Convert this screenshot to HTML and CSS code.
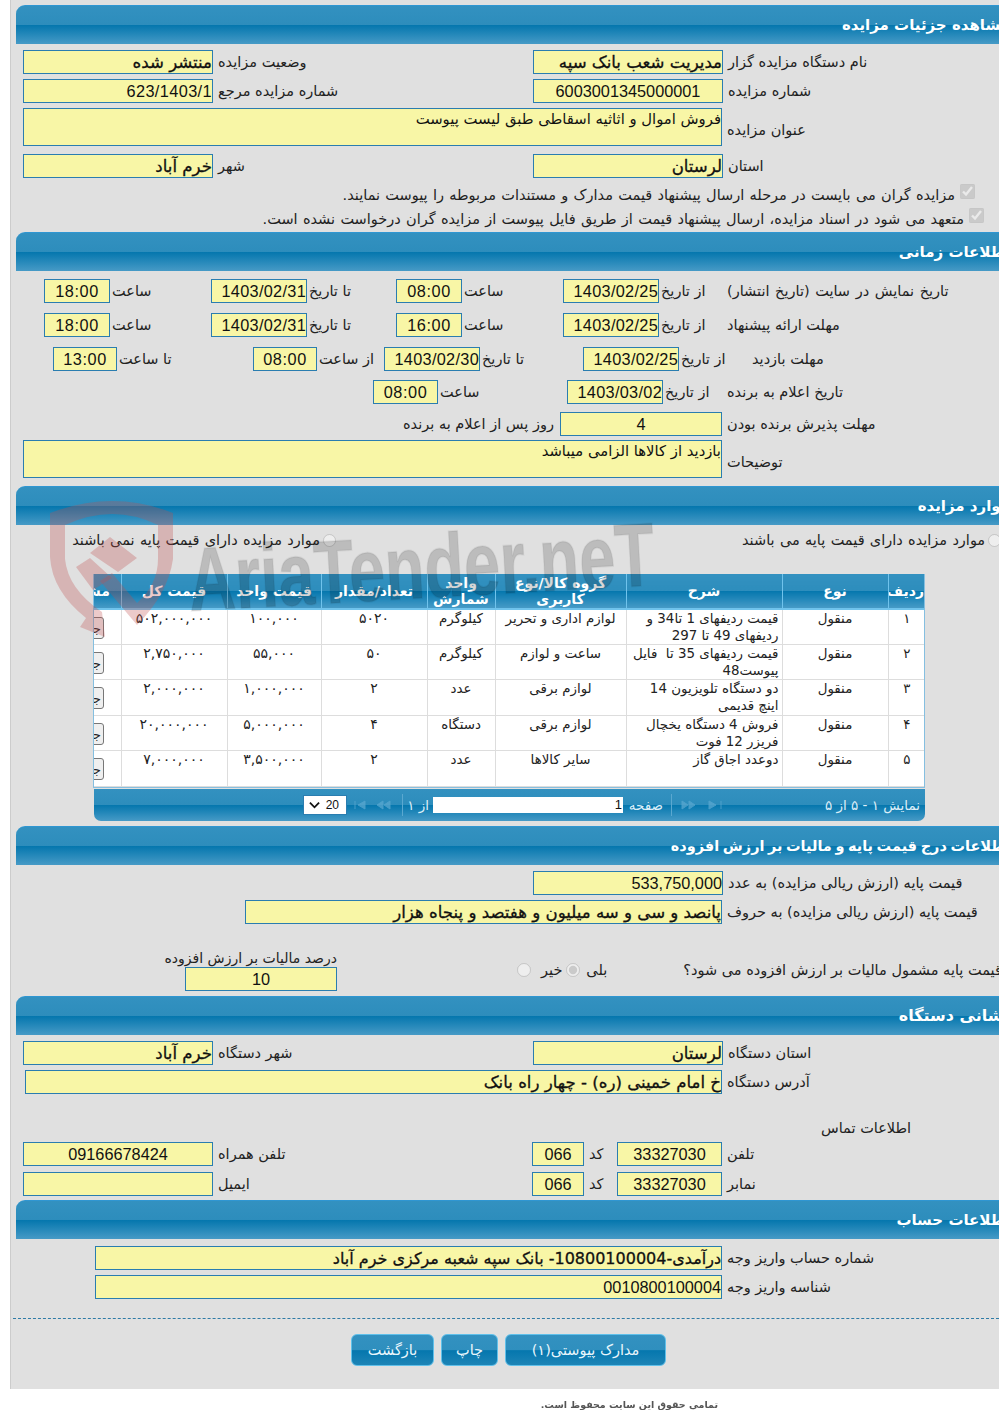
FILE: index.html
```html
<!DOCTYPE html>
<html lang="fa">
<head>
<meta charset="utf-8">
<title>مشاهده جزئیات مزایده</title>
<link rel="stylesheet" href="styles.css">
</head>
<body>
<div class="page">
  <section class="sec s1">
    <h2 class="head">مشاهده جزئیات مزایده</h2>
    <div class="row r50">
      <div class="pair w510"><div class="val w190 hv">منتشر شده</div><span class="lbl">وضعیت مزایده</span></div>
      <div class="pair"><div class="val w190 hv">مدیریت شعب بانک سپه</div><span class="lbl">نام دستگاه مزایده گزار</span></div>
    </div>
    <div class="row r25 t4">
      <div class="pair w510"><div class="val w190 num ref">623/1403/1</div><span class="lbl">شماره مزایده مرجع</span></div>
      <div class="pair"><div class="val w190 num ctr">6003001345000001</div><span class="lbl">شماره مزایده</span></div>
    </div>
    <div class="row t5 mid">
      <div class="pair"><div class="area w699">فروش اموال و اثاثیه اسقاطی طبق لیست پیوست</div><span class="lbl">عنوان مزایده</span></div>
    </div>
    <div class="row r25 t7">
      <div class="pair w510"><div class="val w190 hv">خرم آباد</div><span class="lbl">شهر</span></div>
      <div class="pair"><div class="val w190 hv">لرستان</div><span class="lbl">استان</span></div>
    </div>
    <div class="chk c1"><span class="lbl">مزایده گران می بایست در مرحله ارسال پیشنهاد قیمت مدارک و مستندات مربوطه را پیوست نمایند.</span><input type="checkbox" checked disabled></div>
    <div class="chk c2"><span class="lbl">متعهد می شود در اسناد مزایده، ارسال پیشنهاد قیمت از طریق فایل پیوست از مزایده گران درخواست نشده است.</span><input type="checkbox" checked disabled></div>
  </section>

  <section class="sec s2">
    <h2 class="head">اطلاعات زمانی</h2>
    <div class="row r25 t7 p44">
      <div class="pair w167"><div class="val w66 ctr num time">18:00</div><span class="lbl">ساعت</span></div>
      <div class="pair w185"><div class="val w96 num date">1403/02/31</div><span class="lbl">تا تاریخ</span></div>
      <div class="pair w167"><div class="val w66 ctr num time">08:00</div><span class="lbl">ساعت</span></div>
      <div class="pair w164"><div class="val w96 num date">1403/02/25</div><span class="lbl">از تاریخ</span></div>
      <span class="lbl wide">تاریخ نمایش در سایت (تاریخ انتشار)</span>
    </div>
    <div class="row r25 t9 p44">
      <div class="pair w167"><div class="val w66 ctr num time">18:00</div><span class="lbl">ساعت</span></div>
      <div class="pair w185"><div class="val w96 num date">1403/02/31</div><span class="lbl">تا تاریخ</span></div>
      <div class="pair w167"><div class="val w66 ctr num time">16:00</div><span class="lbl">ساعت</span></div>
      <div class="pair w164"><div class="val w96 num date">1403/02/25</div><span class="lbl">از تاریخ</span></div>
      <span class="lbl">مهلت ارائه پیشنهاد</span>
    </div>
    <div class="row r25 t9 p53">
      <div class="pair w200"><div class="val w64 ctr num time">13:00</div><span class="lbl">تا ساعت</span></div>
      <div class="pair w131"><div class="val w64 ctr num time">08:00</div><span class="lbl">از ساعت</span></div>
      <div class="pair w199"><div class="val w96 num date">1403/02/30</div><span class="lbl">تا تاریخ</span></div>
      <div class="pair w144"><div class="val w96 num date">1403/02/25</div><span class="lbl">از تاریخ</span></div>
      <span class="lbl visit">مهلت بازدید</span>
    </div>
    <div class="row r25 t8 p373">
      <div class="pair w194"><div class="val w65 ctr num time">08:00</div><span class="lbl">ساعت</span></div>
      <div class="pair w160"><div class="val w96 num date">1403/03/02</div><span class="lbl">از تاریخ</span></div>
      <span class="lbl">تاریخ اعلام به برنده</span>
    </div>
    <div class="row r25 t7 p403">
      <span class="lbl w157">روز پس از اعلام به برنده</span>
      <div class="pair"><div class="val w162 ctr num">4</div><span class="lbl">مهلت پذیرش برنده بودن</span></div>
    </div>
    <div class="row t4 mid">
      <div class="pair"><div class="area w699">بازدید از کالاها الزامی میباشد</div><span class="lbl">توضیحات</span></div>
    </div>
  </section>

  <section class="sec s3">
    <h2 class="head">موارد مزایده</h2>
    <div class="radios">
      <div class="radio-left"><span class="lbl">موارد مزایده دارای قیمت پایه نمی باشند</span><input type="radio" disabled></div>
      <div class="radio-right"><span class="lbl">موارد مزایده دارای قیمت پایه می باشند</span><input type="radio" disabled></div>
    </div>
    <div class="grid-wrap">
      <table class="grid">
        <colgroup><col class="c-act"><col class="c-tot"><col class="c-unit"><col class="c-qty"><col class="c-meas"><col class="c-grp"><col class="c-desc"><col class="c-type"><col class="c-idx"></colgroup>
        <thead><tr><th><span class="clip-l">مشاهده</span></th><th>قیمت کل</th><th>قیمت واحد</th><th>تعداد/مقدار</th><th>واحد شمارش</th><th>گروه کالا/نوع کاربری</th><th>شرح</th><th>نوع</th><th>ردیف</th></tr></thead>
        <tbody>
          <tr class="h35"><td class="act"><span class="btn-clip"><button class="mini" disabled>جزئیات</button></span></td><td class="fa">۵۰۲,۰۰۰,۰۰۰</td><td class="fa">۱۰۰,۰۰۰</td><td class="fa">۵۰۲۰</td><td>کیلوگرم</td><td>لوازم اداری و تحریر</td><td class="rt">قیمت ردیفهای 1 تا34 و<br>ردیفهای 49 تا 297</td><td>منقول</td><td>۱</td></tr>
          <tr class="h35"><td class="act"><span class="btn-clip"><button class="mini" disabled>جزئیات</button></span></td><td class="fa">۲,۷۵۰,۰۰۰</td><td class="fa">۵۵,۰۰۰</td><td class="fa">۵۰</td><td>کیلوگرم</td><td>ساعت و لوازم</td><td class="rt">قیمت ردیفهای 35 تا &nbsp;فایل<br>پیوست48</td><td>منقول</td><td>۲</td></tr>
          <tr class="h36"><td class="act"><span class="btn-clip"><button class="mini" disabled>جزئیات</button></span></td><td class="fa">۲,۰۰۰,۰۰۰</td><td class="fa">۱,۰۰۰,۰۰۰</td><td class="fa">۲</td><td>عدد</td><td>لوازم برقی</td><td class="rt">دو دستگاه تلویزیون 14<br>اینچ قدیمی</td><td>منقول</td><td>۳</td></tr>
          <tr class="h35"><td class="act"><span class="btn-clip"><button class="mini" disabled>جزئیات</button></span></td><td class="fa">۲۰,۰۰۰,۰۰۰</td><td class="fa">۵,۰۰۰,۰۰۰</td><td class="fa">۴</td><td>دستگاه</td><td>لوازم برقی</td><td class="rt">فروش 4 دستگاه یخچال<br>فریزر 12 فوت</td><td>منقول</td><td>۴</td></tr>
          <tr class="h36"><td class="act"><span class="btn-clip"><button class="mini" disabled>جزئیات</button></span></td><td class="fa">۷,۰۰۰,۰۰۰</td><td class="fa">۳,۵۰۰,۰۰۰</td><td class="fa">۲</td><td>عدد</td><td>سایر کالاها</td><td class="rt">دوعدد اجاق گاز</td><td>منقول</td><td>۵</td></tr>
        </tbody>
      </table>
    </div>
    <div class="pager">
      <div class="psel"><svg class="chev" viewBox="0 0 12 8"><path d="M1 1.5 6 6.5 11 1.5" fill="none" stroke="#111" stroke-width="2"/></svg><span>20</span></div>
      <svg class="pico" viewBox="0 0 40 10"><path d="M1 1v8M11 1 4 5l7 4zM29 1l-6 4 6 4zM36 1l-6 4 6 4z" fill="#5aa8d0" stroke="#5aa8d0"/></svg>
      <i class="psep"></i>
      <span class="ptext pof">از ۱</span>
      <div class="pinput">1</div>
      <span class="ptext ppg">صفحه</span>
      <i class="psep"></i>
      <svg class="pico pico2" viewBox="0 0 42 10"><path d="M1 1l6 4-6 4zM8 1l6 4-6 4zM28 1l7 4-7 4zM40 1v8" fill="#5aa8d0" stroke="#5aa8d0"/></svg>
      <span class="ptext pshow">نمایش ۱ - ۵ از ۵</span>
    </div>
  </section>

  <section class="sec s4">
    <h2 class="head">اطلاعات درج قیمت پایه و مالیات بر ارزش افزوده</h2>
    <div class="row r25 t5 p533">
      <div class="pair"><div class="val w190 num">533,750,000</div><span class="lbl">قیمت پایه (ارزش ریالی مزایده) به عدد</span></div>
    </div>
    <div class="row r25 t4 p245">
      <div class="pair"><div class="val w477 hv">پانصد و سی و سه میلیون و هفتصد و پنجاه هزار</div><span class="lbl">قیمت پایه (ارزش ریالی مزایده) به حروف</span></div>
    </div>
    <div class="taxrow">
      <div class="taxbox"><span class="lbl">درصد مالیات بر ارزش افزوده</span><div class="val w152 ctr num">10</div></div>
      <div class="taxq">
        <input type="radio" disabled><span class="lbl">خیر</span>
        <input class="rd2" type="radio" checked disabled><span class="lbl">بلی</span>
        <span class="lbl q">قیمت پایه مشمول مالیات بر ارزش افزوده می شود؟</span>
      </div>
    </div>
  </section>

  <section class="sec s5">
    <h2 class="head">نشانی دستگاه</h2>
    <div class="row r25 t5">
      <div class="pair w510"><div class="val w190 hv">خرم آباد</div><span class="lbl">شهر دستگاه</span></div>
      <div class="pair"><div class="val w190 hv">لرستان</div><span class="lbl">استان دستگاه</span></div>
    </div>
    <div class="row r25 t4 p25">
      <div class="pair"><div class="val w697 hv">خ امام خمینی (ره) - چهار راه بانک</div><span class="lbl">آدرس دستگاه</span></div>
    </div>
    <div class="row contact"><span class="lbl">اطلاعات تماس</span></div>
    <div class="row r25 t1">
      <div class="pair w509"><div class="val w190 num ctr">09166678424</div><span class="lbl">تلفن همراه</span></div>
      <div class="pair w85"><div class="val w52 ctr num">066</div><span class="lbl">کد</span></div>
      <div class="pair"><div class="val w105 ctr num">33327030</div><span class="lbl">تلفن</span></div>
    </div>
    <div class="row r25 t5">
      <div class="pair w509"><div class="val w190 num ctr"></div><span class="lbl">ایمیل</span></div>
      <div class="pair w85"><div class="val w52 ctr num">066</div><span class="lbl">کد</span></div>
      <div class="pair"><div class="val w105 ctr num">33327030</div><span class="lbl">نمابر</span></div>
    </div>
  </section>

  <section class="sec s6">
    <h2 class="head">اطلاعات حساب</h2>
    <div class="row r25 t6 p95">
      <div class="pair"><div class="val w627 hv acct">درآمدی-10800100004- بانک سپه شعبه مرکزی خرم آباد</div><span class="lbl">شماره حساب واریز وجه</span></div>
    </div>
    <div class="row r25 t4 p95">
      <div class="pair"><div class="val w627 num">0010800100004</div><span class="lbl">شناسه واریز وجه</span></div>
    </div>
  </section>

  <div class="dash"></div>
  <div class="actions">
    <a class="btn b1">بازگشت</a>
    <a class="btn b2">چاپ</a>
    <a class="btn b3">مدارک پیوستی(۱)</a>
  </div>
</div>
<footer class="foot">تمامی حقوق این سایت محفوظ است.</footer>

<svg class="mark" viewBox="0 0 620 150" aria-hidden="true">
  <path class="mark-s" fill-rule="evenodd" d="M0 14Q63 -10 123 14V60Q118 95 87 126L50 82 62 74 87 104Q108 85 108 60V26Q63 4 15 26V60Q18 90 52 113L55 138 30 128 36 119Q2 92 0 58Z"/>
  <path class="mark-s" d="M40 54 60 38 87 59 68 73ZM26 68 40 59 62 79 43 91Z"/>
  <text class="mark-t" transform="translate(140 112) rotate(-3.2) scale(.72 1)">AriaTender.neT</text>
</svg>
</body>
</html>
```

FILE: styles.css
```css
*{box-sizing:border-box}
html,body{margin:0;padding:0;overflow-x:hidden}
body{position:relative;width:999px;height:1410px;overflow:hidden;background:#fff;font-family:"DejaVu Sans","Liberation Sans",sans-serif;font-size:14px;color:#222}
.page{height:1389px;background:#e0e0e0;margin-left:10px;border-left:1px solid #ccc;padding:5px 0 0 5px;width:989px;position:relative;overflow:hidden}
.page:before{content:"";position:absolute;left:-10px;top:0;width:10px;height:100%;background:#e0e0e0}
.sec{width:1000px;margin-left:0}
.head{height:39px;margin:0;padding:0 6px 2px 0;direction:rtl;font-size:15px;font-weight:bold;line-height:38px;color:#fff;border-top:1px solid #2f96d2;border-top-left-radius:9px;background:linear-gradient(#3391c0 0,#2d8dbc 50%,#0577ae 51%,#469ac6 100%)}
.s1{height:227px}
.s2{height:254px}
.s3{height:340px}
.s4{height:170px}
.s5{height:204px}
.s6{height:100px}
.s4 .head{font-size:14.5px;word-spacing:-1.5px}
.s5 .head{font-size:16px}
.row{display:flex;align-items:center;padding-left:7px}
.mid{align-items:center}
.r50{height:25px;margin-top:5px}
.r25{height:25px}
.t1{margin-top:1px}.t4{margin-top:4px}.t5{margin-top:5px}.t6{margin-top:6px}.t7{margin-top:7px}.t8{margin-top:8px}.t9{margin-top:9px}
.p44{padding-left:28px}.p53{padding-left:37px}.p373{padding-left:357px}.p403{padding-left:387px}.p533{padding-left:517px}.p245{padding-left:229px}.p25{padding-left:9px}.p95{padding-left:79px}
.pair{display:flex;align-items:center;flex:none}
.w510{width:510px}.w509{width:509px}.w85{width:85px}.w167{width:167px}.w185{width:185px}.w164{width:164px}.w200{width:200px}.w131{width:131px}.w199{width:199px}.w144{width:144px}.w194{width:194px}.w160{width:160px}
.val,.area{background:#f8f6a6;border:1px solid #2a7db0;color:#111;direction:rtl;text-align:right;flex:none;font-size:15px;line-height:23px;height:24px;white-space:nowrap;overflow:hidden}
.area{height:38px;white-space:normal;font-size:14.8px;line-height:19px}
.area+.lbl{margin-top:5px}
.num{font-family:"Liberation Sans",sans-serif;font-size:16.3px;direction:ltr}
.ref{letter-spacing:.4px}
.date{letter-spacing:.3px}
.time{letter-spacing:.6px}
.num.ctr,.ctr{text-align:center}
.hv{font-size:16.6px;-webkit-text-stroke:.3px #111}
.acct{font-size:16px}
.w190{width:190px}.w699{width:699px}.w66{width:66px}.w96{width:96px}.w64{width:64px}.w65{width:65px}.w162{width:162px}.w152{width:152px}.w477{width:477px}.w697{width:697px}.w52{width:52px}.w105{width:105px}.w627{width:627px}
.lbl{direction:rtl;margin-left:5px;white-space:nowrap;font-size:14.5px;color:#222;flex:none}
.row>.lbl{margin-left:0}
.p44 .w167 .lbl,.p44 .w185 .lbl,.p44 .w164 .lbl,.p53 .pair .lbl,.p373 .pair .lbl{margin-left:2px}
.row>.lbl.visit{margin-left:25px}
.wide{word-spacing:1px}
.w157{width:157px;text-align:left}
.chk{display:flex;justify-content:flex-end;align-items:center;height:24px;direction:ltr}
.chk .lbl{word-spacing:.7px;position:relative;top:1px}
.chk input{margin:0 0 5px 5px;width:15px;height:15px}
.c1{padding-right:41px;margin-top:4px}
.c2{padding-right:32px}
.radios{display:flex;height:28px;padding-top:2px;align-items:center}
.radio-left{display:flex;align-items:center;justify-content:flex-end;margin-left:54px;width:266px}
.radio-left .lbl,.radio-right .lbl{margin:0 3px 0 0;word-spacing:.7px}
.radio-right{display:flex;align-items:center;margin-left:406px}
.radios input{margin:0;width:13px;height:13px;flex:none}
.grid-wrap{margin:21px 0 0 77px;width:832px;height:214px;overflow:hidden;background:#fff;border:1px solid #85bfe0;border-top:none}
.grid{border-collapse:collapse;table-layout:fixed;width:831px;direction:ltr}
.c-act{width:27px}.c-tot{width:106px}.c-unit{width:94px}.c-qty{width:106px}.c-meas{width:68px}.c-grp{width:131px}.c-desc{width:156px}.c-type{width:106px}.c-idx{width:37px}
.grid th{height:35px;padding:0 1px;font-size:14px;line-height:16px;font-weight:bold;color:#fff;direction:rtl;text-align:center;border-left:1px solid #70c3ec;border-bottom:2px solid #70c3ec;background:linear-gradient(#3391c0 0,#2d8dbc 50%,#0577ae 51%,#469ac6 100%);overflow:hidden}
.grid th:first-child{border-left:none;direction:ltr}
.clip-l{display:block;width:60px;margin-left:-45px;white-space:nowrap;direction:rtl;text-align:right}
.grid td{border:1px solid #ddd;vertical-align:top;text-align:center;direction:rtl;font-size:13.4px;line-height:17px;padding:0 3px;color:#222;overflow:hidden}
.grid td.fa{font-size:14px}
.grid td.act{border-left:none;padding:0;direction:ltr}
.grid td:last-child{border-right:none}
.grid tbody tr:first-child td{border-top:none}
.grid td.rt{text-align:right}
.h35{height:35px}.h36{height:36px}
.btn-clip{display:block;width:10px;overflow:hidden;height:24px;margin-top:7px}
.mini{display:block;width:50px;height:22px;margin-left:-40px;padding:0 2px 0 0;border:1px solid #777;border-radius:3px;background:#efefef;font-size:13px;color:#222;font-family:inherit;text-align:right;direction:rtl;white-space:nowrap}
.pager{display:flex;align-items:center;width:831px;height:32px;margin:1px 0 0 78px;border-bottom-left-radius:7px;border-bottom-right-radius:7px;background:linear-gradient(#3391c0 0,#2d8dbc 50%,#0577ae 51%,#469ac6 100%);position:relative}
.psel{display:flex;align-items:center;justify-content:space-between;width:44px;height:20px;margin-left:209px;background:#fff;border:1px solid #2a7db0;padding:0 7px 0 5px;font-family:"Liberation Sans",sans-serif;font-size:12px;color:#111}
.chev{width:11px;height:8px}
.pico{width:40px;height:10px;margin-left:7px;opacity:.75}
.psep{width:1px;height:22px;background:#5aa8d0;margin-left:8px}
.ptext{color:#ddeef8;direction:rtl;white-space:nowrap;font-size:13.5px}
.pof{margin-left:5px;width:21px}
.pinput{width:190px;height:16px;margin-left:4px;background:#fff;text-align:right;font-family:"Liberation Sans",sans-serif;font-size:13px;line-height:16px;color:#111;padding-right:1px}
.ppg{margin-left:4px;width:36px}
.pico2{margin-left:9px;width:42px}
.pshow{position:absolute;right:5px}
.taxrow{display:flex;margin-top:20px;height:47px;}
.taxbox{display:flex;flex-direction:column;align-items:flex-end;width:321px}
.taxbox .lbl{margin:0;line-height:23px;font-size:14px;position:relative;top:3px}
.taxbox .val{height:24px}
.taxq{display:flex;align-items:center;margin:14px 0 0 180px;height:24px}
.taxq input{margin:0;width:14px;height:14px}
.taxq .lbl{margin-left:10px}
.taxq .rd2{margin-left:4px}
.taxq .lbl:nth-of-type(2){margin-left:6px}
.taxq .q{margin-left:76px}
.contact{height:24px;margin-top:22px;padding-left:805px}
.dash{width:986px;height:1px;margin:18px 0 0 -3px;border-top:1px dashed #2f7ba6}
.actions{display:flex;margin:15px 0 0 335px;gap:7px}
.btn{display:flex;align-items:center;justify-content:center;height:32px;direction:rtl;color:#e9f6fc;font-size:14.5px;border:1px solid #5fc0ea;border-radius:6px;background:linear-gradient(#3391c0 0,#2f8fbe 50%,#0577ae 52%,#1d84b6 100%)}
.b1{width:83px}.b2{width:57px}.b3{width:161px}
.foot{direction:rtl;height:21px;padding:10px 0 0 0;margin:0;width:718px;font-size:9.5px;font-weight:bold;line-height:12px;color:#555;white-space:nowrap;filter:blur(.4px);overflow:hidden}
.mark{position:absolute;left:50px;top:499px;width:620px;height:150px;pointer-events:none;overflow:visible}
.mark-s{fill:#c05050;fill-opacity:.3}
.mark-t{font-family:"Liberation Sans",sans-serif;font-size:90px;font-weight:bold;fill:#000;fill-opacity:.16;stroke:#000;stroke-opacity:.05;stroke-width:2px}
```
